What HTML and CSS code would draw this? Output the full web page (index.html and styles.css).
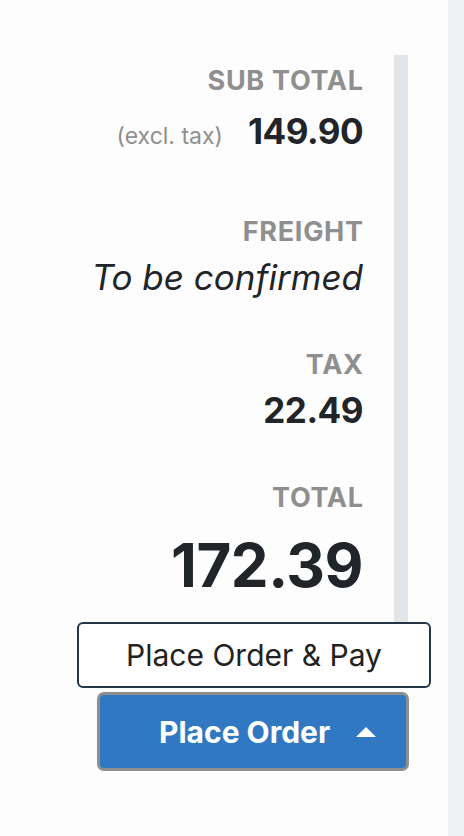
FILE: index.html
```html
<!DOCTYPE html>
<html lang="en">
<head>
    <meta charset="UTF-8">
    <meta name="viewport" content="width=device-width, initial-scale=1.0">
    <title>Order Summary</title>
    <link rel="stylesheet" href="styles.css">
</head>
<body>

<div class="panel">
    <div class="scroll-row">
        <div class="summary">
            <div class="line first">
                <div class="label">SUB TOTAL</div>
                <div class="value-row">
                    <span class="note">(excl. tax)</span>
                    <span class="value">149.90</span>
                </div>
            </div>
            <div class="line">
                <div class="label">FREIGHT</div>
                <div class="value pending">To be confirmed</div>
            </div>
            <div class="line">
                <div class="label">TAX</div>
                <div class="value">22.49</div>
            </div>
            <div class="line">
                <div class="label">TOTAL</div>
                <div class="value grand">172.39</div>
            </div>
        </div>
        <div class="scrollbar"></div>
    </div>

    <div class="actions">
        <div class="dropup">
            <div class="dropup-menu">
                <button class="menu-item">Place Order &amp; Pay</button>
            </div>
            <button class="btn-primary">
                <span>Place Order</span>
                <span class="caret"></span>
            </button>
        </div>
    </div>
</div>
<div class="side-strip"></div>

</body>
</html>
```

FILE: styles.css
```css
body {
    font-family: Inter, Lato, sans-serif;
    background-color: #fdfdfd;
    margin: 0;
    display: flex;
    height: 100vh;
    color: #212529;
}
.panel {
    width: 448px;
    display: flex;
    flex-direction: column;
}
.side-strip {
    flex: 1;
    background-color: #eef1f2;
}
.scroll-row {
    display: flex;
    height: 622px;
}
.summary {
    width: 363px;
    display: flex;
    flex-direction: column;
    align-items: flex-end;
    text-align: right;
    padding-top: 67px;
}
.scrollbar {
    width: 14px;
    margin: 55px 0 0 31px;
    background-color: #e2e6e9;
}
.line {
    margin-bottom: 56px;
}
.line.first {
    margin-bottom: 68px;
}
.label {
    font-size: 27px;
    line-height: 1;
    font-weight: 700;
    letter-spacing: 0.7px;
    margin-right: -0.7px;
    color: #8f8f8f;
}
.value-row {
    display: flex;
    align-items: baseline;
    justify-content: flex-end;
    gap: 25px;
    margin-top: 20px;
}
.value-row .value {
    margin-top: 0;
}
.note {
    font-size: 23px;
    color: #8f8f8f;
}
.value {
    font-size: 35px;
    line-height: 1;
    font-weight: 700;
    letter-spacing: -0.5px;
    margin-top: 15px;
}
.pending {
    font-weight: 400;
    font-style: italic;
    letter-spacing: 0;
}
.grand {
    font-size: 60px;
    margin-top: 24px;
}
.actions {
    padding: 70px 0 0 97px;
}
.dropup {
    position: relative;
    width: 312px;
}
.dropup-menu {
    position: absolute;
    left: -20px;
    bottom: calc(100% + 4px);
    width: 354px;
}
.menu-item {
    width: 100%;
    height: 66px;
    background-color: #ffffff;
    border: 2px solid #253545;
    border-radius: 6px;
    font-family: inherit;
    font-size: 30px;
    color: #222222;
    cursor: pointer;
}
.btn-primary {
    width: 100%;
    height: 79px;
    display: flex;
    align-items: center;
    gap: 26px;
    padding: 0 0 0 59px;
    background-color: #3079c2;
    border: 3px solid #8e8e8e;
    border-radius: 7px;
    font-family: inherit;
    font-size: 30px;
    font-weight: 700;
    color: #ffffff;
    cursor: pointer;
}
.caret {
    width: 0;
    height: 0;
    border-left: 10px solid transparent;
    border-right: 10px solid transparent;
    border-bottom: 10px solid #ffffff;
}
```
